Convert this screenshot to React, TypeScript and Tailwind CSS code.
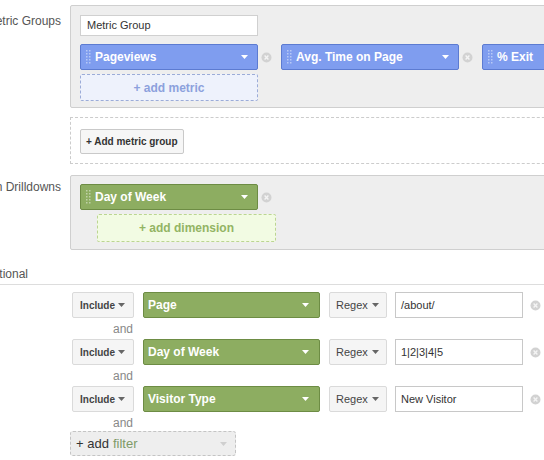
import React from "react";

const font = { fontFamily: '"Liberation Sans", Arial, sans-serif' };

const Handle = () => (
    <svg width="5" height="16" viewBox="0 0 5 16" className="shrink-0">
        {[1, 4, 7, 10, 13].map((y) => (
            <g key={y} fill="rgba(255,255,255,0.45)">
                <rect x="0" y={y} width="1.5" height="1.5" />
                <rect x="3" y={y} width="1.5" height="1.5" />
            </g>
        ))}
    </svg>
);

const Arrow = ({ color = "#ffffff" }: { color?: string }) => (
    <svg width="7" height="4" viewBox="0 0 7 4" className="shrink-0">
        <path d="M0 0 L7 0 L3.5 4 Z" fill={color} />
    </svg>
);

const Remove = () => (
    <svg width="11" height="11" viewBox="0 0 11 11">
        <circle cx="5.5" cy="5.5" r="5" fill="#d2d2d2" />
        <path d="M3.6 3.6 L7.4 7.4 M7.4 3.6 L3.6 7.4" stroke="#f4f4f4" strokeWidth="1.4" />
    </svg>
);

const Pill = ({ label, color }: { label: string; color: "blue" | "green" }) => (
    <div
        className={`w-[178px] h-[26px] shrink-0 rounded-[2px] border flex items-center pl-[5px] pr-[9px] text-white font-bold text-[12px] ${
            color === "blue" ? "bg-[#7f9def] border-[#5c7bd1]" : "bg-[#8dad61] border-[#6d8c44]"
        }`}
    >
        <Handle />
        <span className="ml-[4px] whitespace-nowrap">{label}</span>
        <span className="ml-auto">
            <Arrow />
        </span>
    </div>
);

const Label = ({ text }: { text: string }) => (
    <div className="w-[61px] shrink-0 flex justify-end whitespace-nowrap text-[12px] text-[#555]">{text}</div>
);

const filters = [
    { dim: "Page", value: "/about/" },
    { dim: "Day of Week", value: "1|2|3|4|5" },
    { dim: "Visitor Type", value: "New Visitor" },
];

export default function App() {
    return (
        <div className="w-[544px] h-[460px] overflow-hidden bg-white relative" style={font}>
            {/* Metric groups */}
            <div className="flex pt-[5px]">
                <div className="pt-[7px]">
                    <Label text="Metric Groups" />
                </div>
                <div className="ml-[9px] w-[520px] shrink-0 h-[103px] bg-[#eeeeee] border border-[#cfcfcf] rounded-[2px] pl-[9px] pt-[9px]">
                    <div className="w-[178px] h-[21px] bg-white border border-[#d0d0d0] text-[11px] text-[#333] pl-[6px] flex items-center">
                        Metric Group
                    </div>
                    <div className="flex items-center mt-[8px]">
                        <Pill label="Pageviews" color="blue" />
                        <div className="w-[23px] shrink-0 pl-[3px] flex"><Remove /></div>
                        <Pill label="Avg. Time on Page" color="blue" />
                        <div className="w-[23px] shrink-0 pl-[3px] flex"><Remove /></div>
                        <Pill label="% Exit" color="blue" />
                    </div>
                    <div className="mt-[4px] w-[178px] h-[27px] border border-dashed border-[#9cacd8] bg-[#eef2fc] rounded-[2px] flex items-center justify-center text-[12px] font-bold text-[#8ca1dd]">
                        + add metric
                    </div>
                </div>
            </div>

            {/* Add metric group */}
            <div className="ml-[70px] mt-[9px] w-[520px] h-[47px] border border-dashed border-[#cccccc] pl-[9px] flex items-center">
                <div className="mt-[2px] h-[25px] px-[5px] bg-[#f6f6f6] border border-[#c9c9c9] rounded-[2px] flex items-center text-[10px] font-bold text-[#333] whitespace-nowrap">
                    + Add metric group
                </div>
            </div>

            {/* Drilldowns */}
            <div className="flex mt-[11px]">
                <div className="pt-[3px]">
                    <Label text="Dimension Drilldowns" />
                </div>
                <div className="ml-[9px] w-[520px] shrink-0 h-[75px] bg-[#eeeeee] border border-[#cfcfcf] rounded-[2px] pl-[9px] pt-[8px]">
                    <div className="flex items-center">
                        <Pill label="Day of Week" color="green" />
                        <div className="w-[23px] shrink-0 pl-[3px] flex"><Remove /></div>
                    </div>
                    <div className="mt-[4px] ml-[17px] w-[179px] h-[28px] border border-dashed border-[#bcd592] bg-[#f2fbe3] rounded-[2px] flex items-center justify-center text-[12px] font-bold text-[#93b463]">
                        + add dimension
                    </div>
                </div>
            </div>

            {/* Optional filters */}
            <div className="mt-[17px] flex">
                <div className="w-[28px] h-[14px] leading-[14px] shrink-0 flex justify-end whitespace-nowrap text-[12px] text-[#555]">Optional</div>
            </div>
            <div className="mt-[3px] h-px bg-[#dddddd]" />

            <div className="ml-[72px] mt-[7px]">
                {filters.map((f) => (
                    <div key={f.dim}>
                        <div className="flex items-center h-[26px]">
                            <div className="w-[62px] h-[26px] shrink-0 bg-[#f5f5f5] border border-[#dadada] rounded-[2px] flex items-center pl-[7px] pr-[8px] text-[10px] font-bold text-[#444]">
                                Include
                                <span className="ml-auto"><Arrow color="#666" /></span>
                            </div>
                            <div className="ml-[9px] w-[177px] h-[26px] shrink-0 bg-[#8dad61] border border-[#6d8c44] rounded-[2px] flex items-center pl-[4px] pr-[10px] text-[12px] font-bold text-white">
                                {f.dim}
                                <span className="ml-auto"><Arrow /></span>
                            </div>
                            <div className="ml-[9px] w-[58px] h-[26px] shrink-0 bg-[#f5f5f5] border border-[#dadada] rounded-[2px] flex items-center pl-[6px] pr-[7px] text-[11px] text-[#444]">
                                Regex
                                <span className="ml-auto"><Arrow color="#666" /></span>
                            </div>
                            <div className="ml-[8px] w-[128px] h-[26px] shrink-0 bg-white border border-[#c8c8c8] flex items-center pl-[5px] text-[11px] text-[#333]">
                                {f.value}
                            </div>
                            <div className="ml-[7px] flex"><Remove /></div>
                        </div>
                        <div className="w-[61px] h-[21px] flex items-center justify-end text-[12px] text-[#888]">and</div>
                    </div>
                ))}
                <div className="-ml-[2px] -mt-[2px] w-[166px] h-[25px] border border-dashed border-[#c4c4c4] bg-[#eeeeee] rounded-[3px] flex items-center pl-[5px] pr-[8px] text-[13px]">
                    <span className="text-[#333]">+ add</span>
                    <span className="ml-[4px] text-[#7e9a66]">filter</span>
                    <span className="ml-auto"><Arrow color="#cfcfcf" /></span>
                </div>
            </div>
        </div>
    );
}
